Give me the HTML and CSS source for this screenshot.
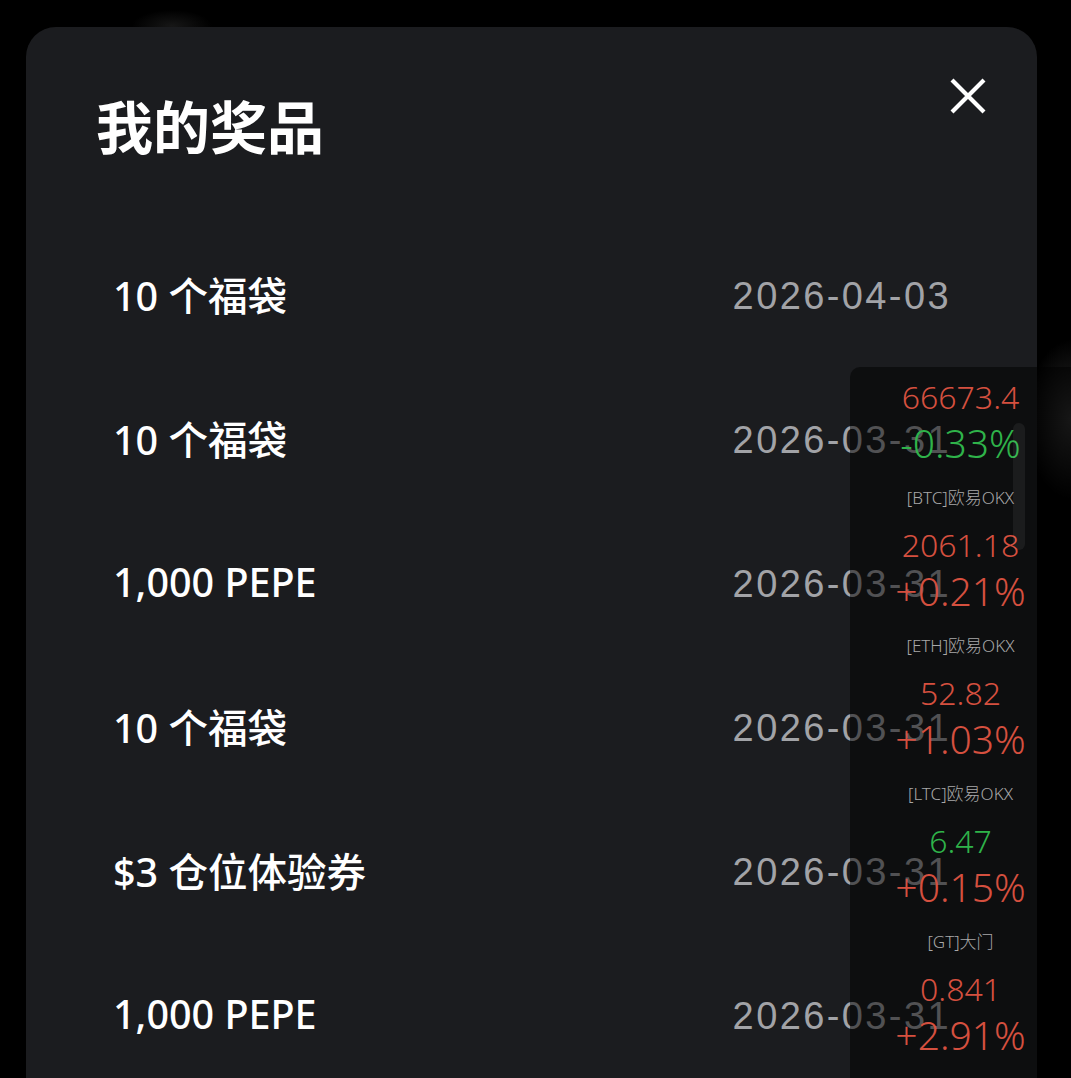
FILE: index.html
```
<!DOCTYPE html>
<html lang="zh">

<head>
    <meta charset="UTF-8">
    <meta name="viewport" content="width=device-width, initial-scale=1.0">
    <title>我的奖品</title>
    <link rel="stylesheet" href="styles.css">
</head>

<body>

    <div class="skjerm">
        <div class="modal">
            <div class="modal_topp">
                <h1 class="tittel">我的奖品</h1>
                <button class="lukk" aria-label="关闭">
                    <svg viewBox="0 0 36 36" width="36" height="36">
                        <path d="M2 2 L34 34 M34 2 L2 34" stroke="#fff" stroke-width="4.2" fill="none" />
                    </svg>
                </button>
            </div>

            <ul class="liste">
                <li class="rad"><span class="navn">10 个福袋</span><span class="dato">2026-04-03</span></li>
                <li class="rad"><span class="navn">10 个福袋</span><span class="dato">2026-03-31</span></li>
                <li class="rad"><span class="navn">1,000 PEPE</span><span class="dato">2026-03-31</span></li>
                <li class="rad"><span class="navn">10 个福袋</span><span class="dato">2026-03-31</span></li>
                <li class="rad"><span class="navn">$3 仓位体验券</span><span class="dato">2026-03-31</span></li>
                <li class="rad"><span class="navn">1,000 PEPE</span><span class="dato">2026-03-31</span></li>
            </ul>
        </div>

        <!-- flytende kursvindu oppå innholdet -->
        <div class="kurs">
            <div class="rullefelt"></div>
            <div class="kurs_post">
                <p class="pris rod">66673.4</p>
                <p class="endring gronn">-0.33%</p>
                <p class="merke">[BTC]欧易OKX</p>
            </div>
            <div class="kurs_post">
                <p class="pris rod">2061.18</p>
                <p class="endring rod">+0.21%</p>
                <p class="merke">[ETH]欧易OKX</p>
            </div>
            <div class="kurs_post">
                <p class="pris rod">52.82</p>
                <p class="endring rod">+1.03%</p>
                <p class="merke">[LTC]欧易OKX</p>
            </div>
            <div class="kurs_post">
                <p class="pris gronn">6.47</p>
                <p class="endring rod">+0.15%</p>
                <p class="merke">[GT]大门</p>
            </div>
            <div class="kurs_post">
                <p class="pris rod">0.841</p>
                <p class="endring rod">+2.91%</p>
                <p class="merke">[GT]大门</p>
            </div>
        </div>
    </div>

</body>

</html>
```

FILE: styles.css
```
* {
    box-sizing: border-box;
}

body {
    margin: 0;
    background-color: #000;
    font-family: "Noto Sans", "Noto Sans CJK SC", sans-serif;
    overflow: hidden;
}

.skjerm {
    position: relative;
    width: 1071px;
    height: 1078px;
    overflow: hidden;
    background:
        radial-gradient(ellipse 45px 80px at 1071px 420px, rgba(75, 75, 75, 0.6), transparent),
        radial-gradient(ellipse 40px 16px at 172px 26px, rgba(50, 50, 50, 0.45), transparent),
        #000;
    padding-top: 27px;
}

.modal {
    width: 1011px;
    margin-left: 26px;
    height: 1051px;
    background-color: #1b1c1f;
    border-radius: 30px 30px 0 0;
}

.modal_topp {
    height: 197px;
    display: flex;
    justify-content: space-between;
    align-items: flex-start;
    padding: 69px 51px 0 70px;
}

.tittel {
    margin: 0;
    font-size: 57px;
    line-height: 56px;
    font-weight: 700;
    color: #fff;
    font-family: "Noto Sans CJK SC", sans-serif;
}

.lukk {
    margin-top: -18px;
    padding: 0;
    border: none;
    background: none;
    width: 36px;
    height: 36px;
}

.lukk svg {
    display: block;
}

.liste {
    list-style: none;
    margin: 0;
    padding: 0;
}

.rad {
    height: 144px;
    display: flex;
    justify-content: space-between;
    align-items: center;
    padding: 0 86px 0 87px;
}

.navn {
    font-size: 39.5px;
    font-weight: 500;
    color: #fff;
    margin-top: -4px;
}

.dato {
    font-family: "Liberation Sans", sans-serif;
    font-size: 38px;
    letter-spacing: 2.4px;
    color: #a2a3a7;
}

.kurs {
    position: absolute;
    left: 850px;
    top: 367px;
    right: 0;
    bottom: 0;
    background-color: rgba(0, 0, 0, 0.5);
    border-radius: 10px 0 0 0;
    padding-top: 7px;
    text-align: center;
    font-family: "Noto Sans", "Noto Sans CJK SC", sans-serif;
    font-weight: 300;
}

.rullefelt {
    position: absolute;
    left: 163px;
    top: 56px;
    width: 12px;
    height: 127px;
    border-radius: 6px;
    background-color: rgba(255, 255, 255, 0.06);
}

.kurs_post p {
    margin: 0;
}

.pris {
    font-size: 32px;
    line-height: 46px;
}

.endring {
    font-size: 39px;
    line-height: 46px;
}

.merke {
    font-size: 17px;
    line-height: 28px;
    padding: 18px 0 10px;
    color: #a8a8a8;
}

.rod {
    color: #d5503f;
}

.gronn {
    color: #2fb34a;
}
```
